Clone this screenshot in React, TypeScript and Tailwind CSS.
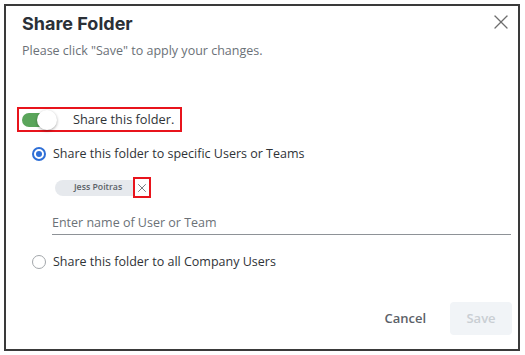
import { X } from "lucide-react";

export default function App() {
  return (
    <div className="w-[525px] h-[355px] bg-white p-[4px] font-['Open_Sans',sans-serif]">
      <div className="relative flex h-full w-[516px] flex-col border-2 border-[#3a3a3a] bg-white">
        {/* Header */}
        <div className="px-[16px] pt-[5px]">
          <h1 className="font-['Inter',sans-serif] text-[18px] font-bold leading-[26px] text-[#2b3037]">
            Share Folder
          </h1>
          <p className="mt-[5px] text-[12.5px] leading-[18px] text-[#6b7177]">
            Please click "Save" to apply your changes.
          </p>
        </div>
        <button className="absolute right-[5px] top-[4px] text-[#6e6e6e]">
          <X className="h-[24px] w-[24px]" strokeWidth={1.3} />
        </button>

        {/* Body */}
        <div className="mt-[47px] pl-[11px] pr-[7px]">
          <div className="flex h-[25px] w-[165px] items-center border-2 border-[#e8141c] pl-[3px]">
            <div className="relative h-[14px] w-[32px] shrink-0 rounded-full bg-[#5aa55b]">
              <div className="absolute right-[-3px] top-[-3px] h-[20px] w-[20px] rounded-full bg-white shadow-[0_1px_3px_rgba(0,0,0,0.35)]" />
            </div>
            <span className="ml-[19px] whitespace-nowrap text-[12.75px] text-[#2f3337]">Share this folder.</span>
          </div>

          <div className="ml-[15px] mt-[12px] flex items-center gap-[7px]">
            <span className="flex h-[14px] w-[14px] items-center justify-center rounded-full border-2 border-[#2f6fd6]">
              <span className="h-[6px] w-[6px] rounded-full bg-[#2f6fd6]" />
            </span>
            <span className="text-[12.5px] leading-[20px] text-[#2f3337]">Share this folder to specific Users or Teams</span>
          </div>

          <div className="ml-[38px] mt-[13px] flex items-center">
            <span className="flex h-[16px] items-center rounded-l-full bg-[#e6e9ed] pl-[19px] pr-[11px] text-[8.75px] font-semibold text-[#5b6168]">
              Jess Poitras
            </span>
            <span className="flex h-[21px] w-[18px] items-center justify-center border-2 border-[#e8141c] text-[#5b6168]">
              <X className="h-[16px] w-[16px]" strokeWidth={1.4} />
            </span>
          </div>

          <div className="ml-[35px] mt-[11px] border-b border-[#8e9297] pb-[1px]">
            <span className="text-[12.5px] leading-[20px] text-[#6b7177]">Enter name of User or Team</span>
          </div>

          <div className="ml-[15px] mt-[17px] flex items-center gap-[7px]">
            <span className="h-[14px] w-[14px] rounded-full border border-[#a3a7ab]" />
            <span className="text-[12.5px] leading-[20px] text-[#2f3337]">Share this folder to all Company Users</span>
          </div>
        </div>

        {/* Footer */}
        <div className="mt-auto flex items-center justify-end gap-[24px] pb-[14px] pr-[6px]">
          <button className="text-[13px] font-semibold text-[#5b6168]">Cancel</button>
          <button className="h-[33px] w-[62px] rounded-[4px] bg-[#f1f4f7] text-[13px] font-semibold text-[#c9ced3]">
            Save
          </button>
        </div>
      </div>
    </div>
  );
}
